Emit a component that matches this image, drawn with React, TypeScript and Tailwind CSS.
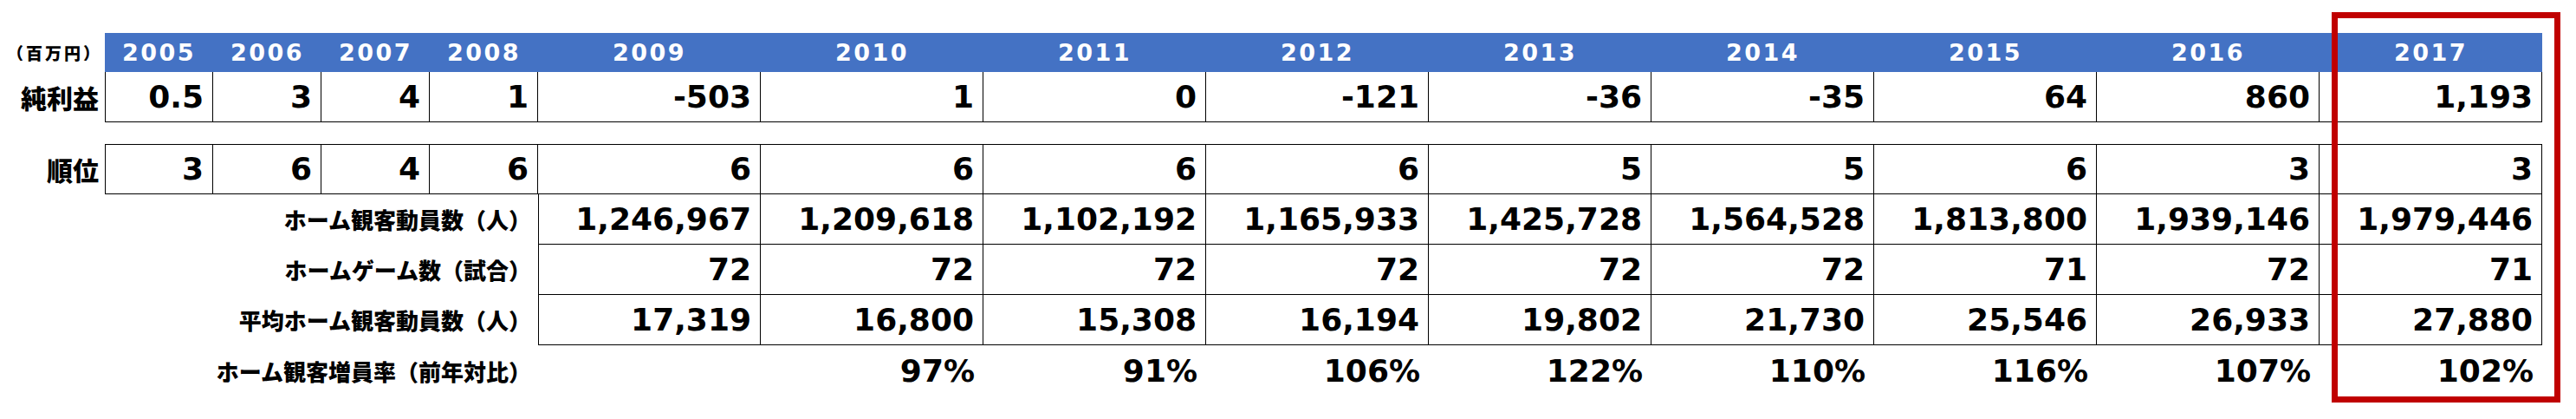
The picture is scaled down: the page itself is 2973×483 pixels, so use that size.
const years = [2005, 2006, 2007, 2008, 2009, 2010, 2011, 2012, 2013, 2014, 2015, 2016, 2017];
const net = ["0.5", "3", "4", "1", "-503", "1", "0", "-121", "-36", "-35", "64", "860", "1,193"];
const rank = ["3", "6", "4", "6", "6", "6", "6", "6", "5", "5", "6", "3", "3"];

// 2009〜2017 のみ
const attendance = ["1,246,967", "1,209,618", "1,102,192", "1,165,933", "1,425,728", "1,564,528", "1,813,800", "1,939,146", "1,979,446"];
const games = ["72", "72", "72", "72", "72", "72", "71", "72", "71"];
const average = ["17,319", "16,800", "15,308", "16,194", "19,802", "21,730", "25,546", "26,933", "27,880"];
const rate = ["", "97%", "91%", "106%", "122%", "110%", "116%", "107%", "102%"];

const grid = "grid grid-cols-[121px_repeat(4,125px)_repeat(9,257px)]";
const num = "font-['DejaVu_Sans','Noto_Sans_CJK_JP',sans-serif] font-bold text-[36px] leading-none text-black";
const jp = "font-['Noto_Sans_CJK_JP',sans-serif] font-black leading-none text-black";

function Cell({ value, first, top }: { value: string; first?: boolean; top?: boolean }) {
  return (
    <div
      className={`flex h-[58px] items-center justify-end border-b border-r border-black pr-[10px] ${num} ${first ? "border-l" : ""} ${top ? "border-t" : ""}`}
    >
      {value}
    </div>
  );
}

function SubRow({ label, values }: { label: string; values: string[] }) {
  return (
    <div className={grid}>
      <div className={`col-span-5 flex h-[58px] items-center justify-end pr-[8px] text-[26px] ${jp}`}>{label}</div>
      {values.map((v, i) => (
        <Cell key={i} value={v} first={i === 0} />
      ))}
    </div>
  );
}

export default function App() {
  return (
    <div className="relative h-[483px] w-[2973px] bg-white pt-[38px]">
      {/* 年度ヘッダー */}
      <div className={grid}>
        <div className={`flex h-[45px] items-center justify-end pr-[3px] text-[19px] tracking-[3px] ${jp}`}>（百万円）</div>
        {years.map((y) => (
          <div
            key={y}
            className="flex h-[45px] items-center justify-center bg-[#4472c4] font-['DejaVu_Sans',sans-serif] text-[27px] font-bold leading-none tracking-[2.5px] text-white"
          >
            {y}
          </div>
        ))}
      </div>

      {/* 純利益 */}
      <div className={grid}>
        <div className={`flex h-[58px] items-center justify-end pr-[7px] text-[30px] ${jp}`}>純利益</div>
        {net.map((v, i) => (
          <Cell key={i} value={v} first={i === 0} />
        ))}
      </div>

      <div className="h-[25px]" />

      {/* 順位 */}
      <div className={grid}>
        <div className={`flex h-[58px] items-center justify-end pr-[7px] text-[30px] ${jp}`}>順位</div>
        {rank.map((v, i) => (
          <Cell key={i} value={v} first={i === 0} top />
        ))}
      </div>

      <SubRow label="ホーム観客動員数（人）" values={attendance} />
      <SubRow label="ホームゲーム数（試合）" values={games} />
      <SubRow label="平均ホーム観客動員数（人）" values={average} />

      {/* 前年対比 */}
      <div className={grid}>
        <div className={`col-span-5 flex h-[60px] items-center justify-end pr-[8px] text-[26px] ${jp}`}>ホーム観客増員率（前年対比）</div>
        {rate.map((v, i) => (
          <div key={i} className={`flex h-[60px] items-center justify-end pr-[10px] ${num}`}>
            {v}
          </div>
        ))}
      </div>

      {/* 2017 強調枠 */}
      <div className="absolute left-[2691px] top-[14px] h-[450px] w-[264px] border-[7px] border-[#c00000]" />
    </div>
  );
}
